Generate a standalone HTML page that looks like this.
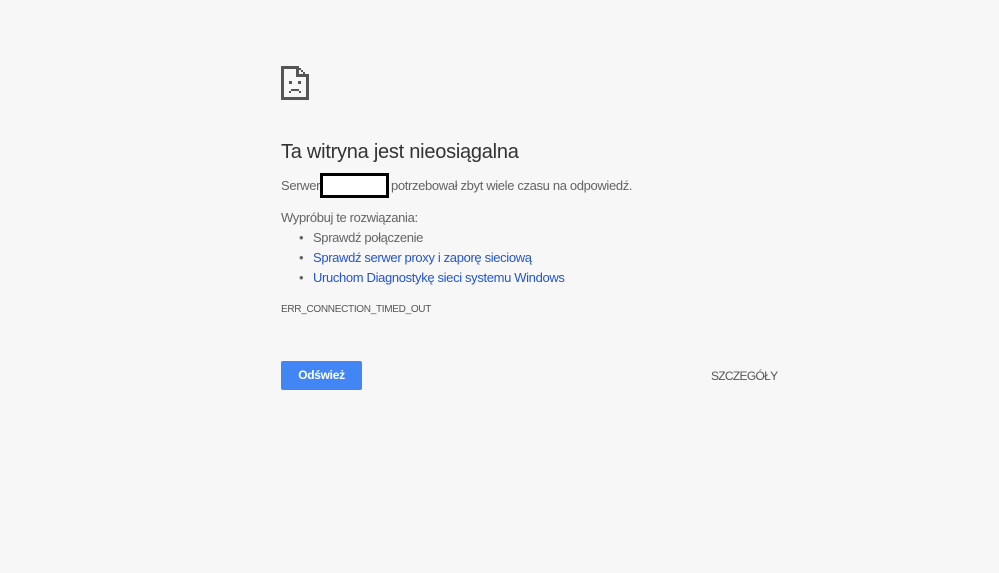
<!DOCTYPE html>
<html><head><meta charset="utf-8"><style>
body{margin:0;background:#f7f7f7;width:999px;height:573px;position:relative;font-family:"Liberation Sans",sans-serif;color:#646464;overflow:hidden}
.a{position:absolute;white-space:nowrap}
h1{position:absolute;left:281px;top:141px;margin:0;font-weight:normal;font-size:20px;color:#333;letter-spacing:-0.25px}
.t{font-size:13px;line-height:20px;letter-spacing:-0.35px}
.b{color:#2255cc}
</style></head><body>
<svg class="a" style="left:281px;top:65px" width="28" height="35" viewBox="0 0 28 35">
<g fill="#555">
<rect x="0" y="1" width="3" height="34"/>
<rect x="0" y="32" width="28" height="3"/>
<rect x="25" y="10" width="3" height="25"/>
<rect x="0" y="1" width="18" height="3"/>
<rect x="15" y="1" width="3" height="11"/>
<rect x="15" y="9" width="13" height="3"/>
<rect x="18" y="3" width="2" height="2"/><rect x="20" y="5" width="2" height="2"/><rect x="22" y="7" width="2" height="2"/>
<rect x="8" y="16" width="3" height="3"/><rect x="17" y="16" width="3" height="3"/>
<rect x="10" y="24" width="8" height="2"/><rect x="8" y="26" width="2" height="2"/><rect x="18" y="26" width="2" height="2"/>
</g></svg>
<h1>Ta witryna jest nieosiągalna</h1>
<div class="a t" style="left:281px;top:176px">Serwer</div>
<div class="a t" style="left:391px;top:176px">potrzebował zbyt wiele czasu na odpowiedź.</div>
<div class="a" style="left:320px;top:173px;width:63px;height:19px;border:3px solid #000;background:#fff"></div>
<div class="a t" style="left:281px;top:208px">Wypróbuj te rozwiązania:</div>
<div class="a t" style="left:299px;top:228px">•&nbsp;&nbsp;&nbsp;Sprawdź połączenie</div>
<div class="a t" style="left:299px;top:248px">•&nbsp;&nbsp;&nbsp;<span class="b">Sprawdź serwer proxy i zaporę sieciową</span></div>
<div class="a t" style="left:299px;top:268px">•&nbsp;&nbsp;&nbsp;<span class="b">Uruchom Diagnostykę sieci systemu Windows</span></div>
<div class="a" style="left:281px;top:304px;font-size:10px;color:#555;letter-spacing:-0.3px">ERR_CONNECTION_TIMED_OUT</div>
<div class="a" style="left:281px;top:361px;width:81px;height:29px;background:#4285f4;border-radius:2px;color:#fff;font-size:12px;font-weight:bold;text-align:center;line-height:29px;letter-spacing:-0.3px">Odśwież</div>
<div class="a" style="left:711px;top:369px;font-size:12px;color:#555;letter-spacing:-0.7px">SZCZEGÓŁY</div>
</body></html>
